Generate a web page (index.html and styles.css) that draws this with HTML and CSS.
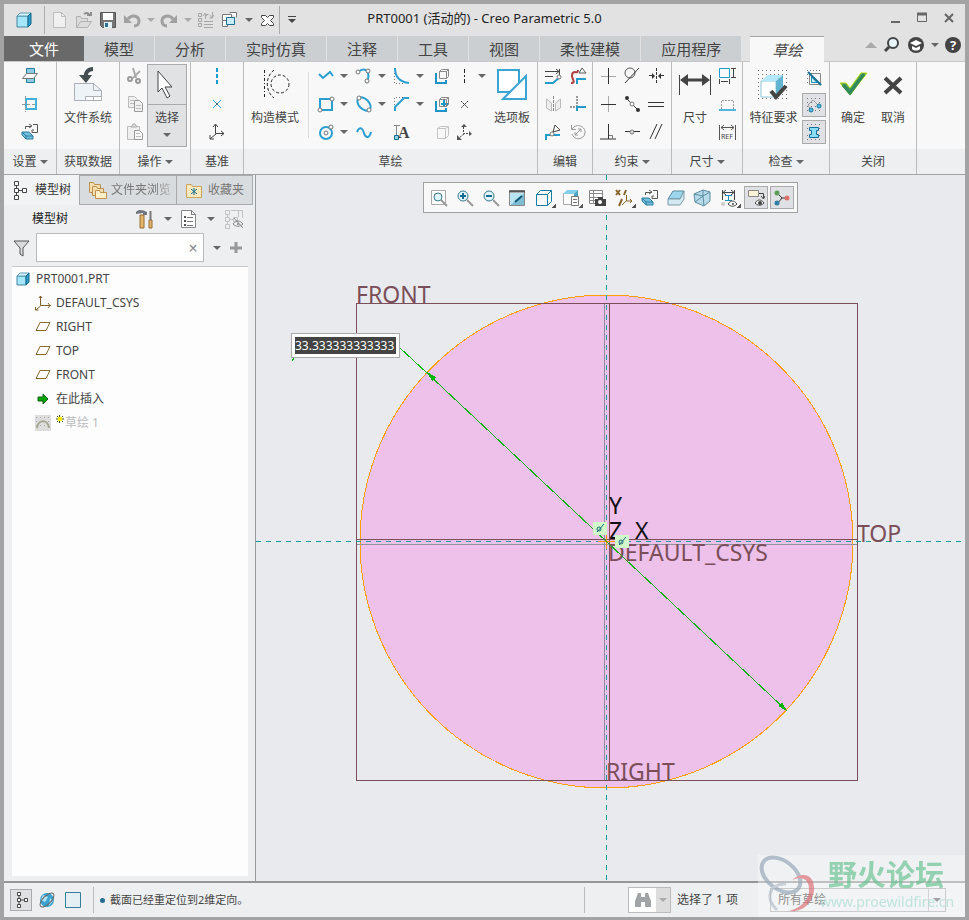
FILE: index.html
```html
<!doctype html>
<html lang="zh-CN">
  <head>
    <meta charset="UTF-8" />
    <meta name="viewport" content="width=device-width, initial-scale=1.0" />
    <title>PRT0001 (活动的) - Creo Parametric 5.0</title>
    <link rel="stylesheet" href="styles.css">
  </head>
  <body>
    <div class="window">
      <header class="titlebar">
        <div class="quick-access">
          <span class="app-icon"><svg class="icon" width="18" height="18"><path d="M2 5h11v11H2z" fill="#a5e6fb" stroke="#45859f"/><path d="M2 5l3-3h11l-3 3z" fill="#d8f5ff" stroke="#5b9ab4"/><path d="M13 5l3-3v11l-3 3z" fill="#2d9bc8" stroke="#10688f"/></svg></span>
          <button class="qa sep" aria-label="新建"><svg class="icon" width="18" height="18"><path d="M3.500 1.500h8l4 4v11h-12z" fill="#f0f0f0" stroke="#bbb"/><path d="M11.500 1.500v4h4" stroke="#bbb"/></svg></button>
          <button class="qa" aria-label="打开"><svg class="icon" width="18" height="18"><path d="M1.500 16.500v-11h4l1 2h6v3M1.500 16.500l4-6h11l-4 6z" fill="#dcdcdc" stroke="#b2b2b2"/><path d="M9 3c3-2 5-1 6 2M12 4h4V1" stroke="#8f8f8f" stroke-width="2"/></svg></button>
          <button class="qa" aria-label="保存"><svg class="icon" width="18" height="18"><path d="M1.500 1.500h15v15h-13l-2-2z" fill="#777" stroke="#555"/><path d="M4 2h10v7H4z" fill="#fff"/><path d="M5 11h8v6H5z" fill="#e4f2f7"/><path d="M6 12h3v4H6z" fill="#277596"/></svg></button>
          <button class="qa" aria-label="撤销"><svg class="icon" width="18" height="18"><path d="M5 8c4-5 11-3 11 2 0 3-2 5-5 5" stroke="#a0a0a0" stroke-width="3"/><path d="M1 4v8h8z" fill="#a0a0a0"/></svg></button>
          <button class="drop" aria-label="撤销列表"><i class="caret pale"></i></button>
          <button class="qa" aria-label="重做"><svg class="icon" width="18" height="18"><path d="M13 8C9 3 2 5 2 10c0 3 2 5 5 5" stroke="#a0a0a0" stroke-width="3"/><path d="M17 4v8H9z" fill="#a0a0a0"/></svg></button>
          <button class="drop" aria-label="重做列表"><i class="caret pale"></i></button>
          <button class="qa" aria-label="重新生成"><svg class="icon" width="18" height="18"><path d="M1.500 2.500h3v3h-3zM1.500 7.500h3v3h-3zM1.500 12.500h3v3h-3zM7 10.500h9M7 13.500h9M7 16.500h9M8.500 8V3.500h3M15.500 1v6h-3M6 5l2-3 2 3M13 4l2 3 2-3" stroke="#a5a5a5"/></svg></button>
          <button class="qa" aria-label="窗口"><svg class="icon" width="18" height="18"><path d="M1.500 3.500h9v6h-9zM8.500 1.500h7v5M1.500 9.500h5v6h-5z" fill="#fff" stroke="#777"/><path d="M5.500 6.500h8v7h-8z" fill="#c8ecf8" stroke="#1f6f90"/></svg></button>
          <button class="drop" aria-label="窗口列表"><i class="caret"></i></button>
          <button class="qa" aria-label="关闭窗口"><svg class="icon" width="18" height="18"><path d="M3.500 4.500h4l2 2 2-2h4v2l-3 3 3 3v2h-4l-2-2-2 2h-4v-2l3-3-3-3z" fill="#fff" stroke="#444"/></svg></button>
          <button class="drop sep" aria-label="自定义快速访问工具栏"><svg class="icon" width="10" height="10"><path d="M1 1.500h8" stroke="#444"/><path d="M1 4h8L5 8z" fill="#444"/></svg></button>
        </div>
        <h1>PRT0001 (活动的) - Creo Parametric 5.0</h1>
        <div class="window-controls">
          <button aria-label="最小化"><svg class="icon" width="12" height="12"><path d="M2 10h9" stroke="#666" stroke-width="2"/></svg></button>
          <button aria-label="最大化"><svg class="icon" width="12" height="12"><path d="M1.500 1.500h9v8h-9z" stroke="#666"/><path d="M1 2h10" stroke="#666" stroke-width="3"/></svg></button>
          <button aria-label="关闭"><svg class="icon" width="12" height="12"><path d="M2 2l8 8M10 2l-8 8" stroke="#666" stroke-width="2"/></svg></button>
        </div>
      </header>

      <nav class="tabs">
        <button class="tab file">文件</button>
        <button class="tab">模型</button>
        <button class="tab">分析</button>
        <button class="tab">实时仿真</button>
        <button class="tab">注释</button>
        <button class="tab">工具</button>
        <button class="tab">视图</button>
        <button class="tab">柔性建模</button>
        <button class="tab">应用程序</button>
        <button class="tab active">草绘</button>
        <div class="tab-tools">
          <button aria-label="折叠功能区"><i class="caret up"></i></button>
          <button aria-label="搜索"><svg class="icon" width="18" height="18"><circle cx="10" cy="7" r="5" fill="#e8f5fa" stroke="#444" stroke-width="2"/><path d="M6 11l-4 4" stroke="#444" stroke-width="3"/></svg></button>
          <button aria-label="学习"><svg class="icon" width="18" height="18"><circle cx="9" cy="9" r="8" fill="#444"/><path d="M3 7l6-3 6 3-6 3zM5 10l4 2 4-2v3c-2 2-6 2-8 0z" fill="#fff"/></svg></button>
          <button aria-label="学习列表"><i class="caret"></i></button>
          <button class="help" aria-label="帮助">?</button>
        </div>
      </nav>

      <div class="ribbon">
        <section class="group g-setup">
          <div class="tools">
            <div class="col">
              <button aria-label="草绘设置"><svg class="icon" width="18" height="18"><path d="M5.500 1.500h8v14h-8z" fill="#8ccbe3" stroke="#267c9f"/><path d="M1.500 11.500l4-5h11l-4 5z" fill="#fff" stroke="#777"/></svg></button>
              <button aria-label="参考"><svg class="icon" width="18" height="18"><path d="M5 4h10v10H5z" stroke="#42aeda" stroke-width="2"/><path d="M1 9.500h15M4.500 1v16" stroke="#999" stroke-dasharray="3 2"/></svg></button>
              <button aria-label="草绘视图"><svg class="icon" width="18" height="18"><path d="M4.500 6V3.500H10M8 1l3 2-3 2M12 1.500h4.500v8H11V7h2" stroke="#555"/><path d="M1 9h7l4 4v3H5l-4-4z" fill="#76bfdc" stroke="#267c9f"/><path d="M1 9l4 4h7M5 13v3" stroke="#267c9f"/></svg></button>
            </div>
          </div>
          <h2><button>设置<i class="caret"></i></button></h2>
        </section>

        <section class="group g-data">
          <div class="tools">
            <button class="big">
              <svg class="icon" width="34" height="36"><path d="M3.500 17.500h19l8 7v10h-27z" fill="#eef3f7" stroke="#aab0b5"/><path d="M22.500 17v7.500H30" stroke="#aab0b5"/><path d="M14.500 30.500h16v4h-16zM22.500 30v4" fill="#fff" stroke="#aab0b5"/><path d="M22 3c-5 0-8 4-7 8" stroke="#444d50" stroke-width="4"/><path d="M8 9h13l-6 8z" fill="#444d50"/></svg>
              <span>文件系统</span>
            </button>
          </div>
          <h2><button>获取数据</button></h2>
        </section>

        <section class="group g-ops">
          <div class="tools">
            <div class="col">
              <button aria-label="剪切"><svg class="icon" width="18" height="18"><path d="M7 1l3 10M14 4L7 11" stroke="#aaa" stroke-width="2"/><circle cx="4" cy="12" r="2" stroke="#999" stroke-width="2"/><circle cx="12" cy="14" r="2" stroke="#999" stroke-width="2"/></svg></button>
              <button aria-label="复制"><svg class="icon" width="18" height="18"><path d="M2.500 1.500h6l3 3v8h-9z" fill="#f0f0f0" stroke="#bbb"/><path d="M8.500 5.500h5l3 3v8h-8z" fill="#f0f0f0" stroke="#999"/><path d="M4 5.500h4M4 8.500h4M10 10.500h5M10 13.500h5" stroke="#bbb"/></svg></button>
              <button aria-label="粘贴"><svg class="icon" width="18" height="18"><path d="M1.500 3.500h12v13h-12z" fill="#eee" stroke="#bbb"/><path d="M5 4l2-3h2l2 3z" fill="#ddd" stroke="#aaa"/><path d="M8.500 7.500h5l3 3v6h-8z" fill="#f8f8f8" stroke="#999"/><path d="M10 10.500h4M10 13.500h5" stroke="#bbb"/></svg></button>
            </div>
            <button class="select-button">
              <span class="select-face"><svg class="icon" width="20" height="30"><path d="M1 1v21l4-4 5 10 3-2-5-9h7z" fill="#fff" stroke="#444"/></svg></span>
              <span class="select-text">选择<i class="caret"></i></span>
            </button>
          </div>
          <h2><button>操作<i class="caret"></i></button></h2>
        </section>

        <section class="group g-datum">
          <div class="tools">
            <div class="col">
              <button aria-label="中心线"><svg class="icon" width="18" height="18"><path d="M9 1v16" stroke="#1b9ad2" stroke-width="2" stroke-dasharray="4 2"/></svg></button>
              <button aria-label="点"><svg class="icon" width="18" height="18"><path d="M5 5l8 8M13 5l-8 8" stroke="#25a2d5"/><path d="M8 8h2v2H8z" fill="#666"/></svg></button>
              <button aria-label="坐标系"><svg class="icon" width="18" height="18"><path d="M7.500 2v8.500H16M8 11l-6 5M5 4l2.500-3L10 4M13 8l3 2.500-3 2.500M2 12v4h4" stroke="#444"/></svg></button>
            </div>
          </div>
          <h2><button>基准</button></h2>
        </section>

        <section class="group g-sketch">
          <div class="tools">
            <button class="big construct">
              <svg class="icon" width="34" height="36"><path d="M6.500 4v29" stroke="#222" stroke-dasharray="3 2 1 2"/><path d="M16 4c-9 7-9 21 0 28" stroke="#222" stroke-dasharray="3 2"/><circle cx="22" cy="18" r="9" stroke="#222" stroke-dasharray="3 2"/></svg>
              <span>构造模式</span>
            </button>
            <div class="sketch-grid">
              <button aria-label="线链"><svg class="icon" width="18" height="18"><path d="M2 7l4 4 7-6 3 4" stroke="#2c9fd1" stroke-width="2"/></svg></button><button class="drop" aria-label="线链列表"><i class="caret"></i></button>
              <button aria-label="弧"><svg class="icon" width="18" height="18"><path d="M3 5c6-5 12-2 10 7l-2 4" stroke="#2c9fd1" stroke-width="2"/><g fill="#fff" stroke="#777"><circle cx="3" cy="5" r="2"/><circle cx="13" cy="4" r="2"/><circle cx="12" cy="14" r="2"/></g></svg></button><button class="drop" aria-label="弧列表"><i class="caret"></i></button>
              <button aria-label="圆角"><svg class="icon" width="18" height="18"><path d="M2 1c0 9 5 14 14 15" stroke="#2c9fd1" stroke-width="2"/><path d="M1.500 6v10.500H10" stroke="#777" stroke-dasharray="1 2"/></svg></button><button class="drop" aria-label="圆角列表"><i class="caret"></i></button>
              <button aria-label="偏移"><svg class="icon" width="18" height="18"><path d="M3 6v10h10v-3" stroke="#1e94c6" stroke-width="2"/><path d="M6.500 4.500h7v7h-7zM6.500 4.500l2-2h7v7l-2 2M13.500 4.500l2-2" stroke="#888"/></svg></button>
              <button aria-label="中心线"><svg class="icon" width="18" height="18"><path d="M9.500 2v15" stroke="#222" stroke-dasharray="4 2 2 2"/></svg></button><button class="drop" aria-label="中心线列表"><i class="caret"></i></button>

              <button aria-label="矩形"><svg class="icon" width="18" height="18"><path d="M3 4h12v11H3z" stroke="#2c9fd1" stroke-width="2"/><g fill="#fff" stroke="#777"><circle cx="15" cy="4" r="2"/><circle cx="3" cy="15" r="2"/></g></svg></button><button class="drop" aria-label="矩形列表"><i class="caret"></i></button>
              <button aria-label="椭圆"><svg class="icon" width="18" height="18"><ellipse cx="9" cy="9" rx="8" ry="5" transform="rotate(45 9 9)" stroke="#2c9fd1" stroke-width="2"/><g fill="#fff" stroke="#777"><circle cx="4" cy="3" r="2"/><circle cx="14" cy="15" r="2"/></g></svg></button><button class="drop" aria-label="椭圆列表"><i class="caret"></i></button>
              <button aria-label="倒角"><svg class="icon" width="18" height="18"><path d="M2 16v-4L11 3h5" stroke="#2c9fd1" stroke-width="2"/><path d="M1.500 10V2.500H10" stroke="#777" stroke-dasharray="1 2"/></svg></button><button class="drop" aria-label="倒角列表"><i class="caret"></i></button>
              <button aria-label="加厚"><svg class="icon" width="18" height="18"><path d="M3 6v10h10v-3M8 9h7M11 4v7" stroke="#1e94c6" stroke-width="2"/><path d="M6.500 4.500h7v7h-7zM6.500 4.500l2-2h7v7l-2 2M13.500 4.500l2-2" stroke="#888"/></svg></button>
              <button aria-label="点"><svg class="icon" width="18" height="18"><path d="M6 6l7 7M13 6l-7 7" stroke="#222" stroke-dasharray="2 1"/></svg></button><span></span>

              <button aria-label="圆"><svg class="icon" width="18" height="18"><circle cx="9" cy="10" r="6" stroke="#2c9fd1" stroke-width="2"/><g fill="#fff" stroke="#777"><circle cx="9" cy="10" r="2"/><circle cx="14" cy="4" r="2"/></g></svg></button><button class="drop" aria-label="圆列表"><i class="caret"></i></button>
              <button aria-label="样条"><svg class="icon" width="18" height="18"><path d="M2 9c3-7 6-3 7 1s5 7 7-1" stroke="#2c9fd1" stroke-width="2"/></svg></button><span></span>
              <button aria-label="文本"><svg class="icon" width="18" height="18"><path d="M1 2.500h6M3.500 3v10" stroke="#888"/><path d="M1.500 12.500h4v4h-4z" fill="#8dd4ef" stroke="#176c93"/><text class="letter" x="5" y="15">A</text></svg></button><span></span>
              <button aria-label="投影"><svg class="icon" width="18" height="18"><path d="M4.500 5.500h8v10h-8zM4.500 5.500l3-2h8v9l-3 3M12.500 5.500l3-2" stroke="#c5c5c5"/></svg></button>
              <button aria-label="坐标系"><svg class="icon" width="18" height="18"><path d="M8.500 4v6.500H14M9 11l-5 4" stroke="#444" stroke-dasharray="2 1"/><path d="M6 4l3-3 3 3zM14 8l3 3-3 2zM2 12v5h5z" fill="#555"/></svg></button><span></span>
            </div>
            <button class="big palette">
              <svg class="icon" width="34" height="36"><path d="M3 4h21v22H3z" fill="#fff" stroke="#3aa5d5" stroke-width="2"/><path d="M31 10v23H8z" fill="#fff" stroke="#3aa5d5" stroke-width="2"/></svg>
              <span>选项板</span>
            </button>
          </div>
          <h2><button>草绘</button></h2>
        </section>

        <section class="group g-edit">
          <div class="tools">
            <div class="col two">
              <button aria-label="修改"><svg class="icon" width="18" height="18"><path d="M1 4.500h15M15.500 2v6M12 2l3 2.500L12 7M1 9.500h8" stroke="#444"/><path d="M1 16h8l7-6" stroke="#239bcb" stroke-width="2"/><circle cx="15" cy="10" r="2" fill="#fff" stroke="#777"/></svg></button>
              <button aria-label="删除段"><svg class="icon" width="18" height="18"><path d="M2 16c6 0 0-5 1-8 1-6 6 0 6-5" stroke="#b04040" stroke-width="2"/><path d="M8 17V12h9" stroke="#239bcb" stroke-width="2"/><path d="M10 6l3-5 4 5z" fill="#fff" stroke="#555"/></svg></button>
              <button aria-label="镜像"><svg class="icon" width="18" height="18"><path d="M2.500 4l5 4v8l-5-3zM16.500 4l-5 4v8l5-3z" fill="#eee" stroke="#bbb"/><path d="M9.500 1v16" stroke="#888" stroke-dasharray="3 1"/></svg></button>
              <button aria-label="拐角"><svg class="icon" width="18" height="18"><path d="M8 16v-4h9" stroke="#239bcb" stroke-width="2"/><path d="M8 1v10M1 12h6" stroke="#999" stroke-width="2" stroke-dasharray="2 1"/></svg></button>
              <button aria-label="分割"><svg class="icon" width="18" height="18"><path d="M2 17v-5h14" stroke="#239bcb" stroke-width="2"/><circle cx="8" cy="11" r="2" fill="#fff" stroke="#777"/><path d="M9 9l2-7 5 5z" fill="#fff" stroke="#444"/></svg></button>
              <button aria-label="旋转调整大小"><svg class="icon" width="18" height="18"><path d="M3 6c5-7 14-2 13 4-1 7-11 8-13 1M2.500 2v4.500H7M6 12l6-6M9 6h3v3M6 9v3h3" stroke="#999"/></svg></button>
            </div>
          </div>
          <h2><button>编辑</button></h2>
        </section>

        <section class="group g-constrain">
          <div class="tools">
            <div class="col three">
              <button aria-label="竖直"><svg class="icon" width="18" height="18"><path d="M2 9.500h15" stroke="#aaa"/><path d="M9.500 1v16" stroke="#333"/></svg></button>
              <button aria-label="相切"><svg class="icon" width="18" height="18"><circle cx="7" cy="6" r="5" stroke="#555"/><path d="M2 16L16 1" stroke="#333"/></svg></button>
              <button aria-label="对称"><svg class="icon" width="18" height="18"><path d="M9.500 1v16" stroke="#333" stroke-dasharray="3 1"/><path d="M2 8.500h5M17 8.500h-5" stroke="#333"/><path d="M5 6l3 3-3 3zM14 6l-3 3 3 3z" fill="#333"/></svg></button>
              <button aria-label="水平"><svg class="icon" width="18" height="18"><path d="M9.500 1v16" stroke="#aaa"/><path d="M2 9.500h15" stroke="#333"/></svg></button>
              <button aria-label="中点"><svg class="icon" width="18" height="18"><path d="M4 4l11 11" stroke="#333"/><circle cx="4" cy="3" r="2" fill="#333"/><circle cx="15" cy="15" r="2" fill="#333"/><circle cx="9" cy="9" r="2" fill="#fff" stroke="#777"/></svg></button>
              <button aria-label="相等"><svg class="icon" width="18" height="18"><path d="M1 7.500h16M1 11.500h16" stroke="#333"/></svg></button>
              <button aria-label="垂直"><svg class="icon" width="18" height="18"><path d="M9.500 1v15M1 16h16" stroke="#333"/><path d="M10 12.500h3.500V16" stroke="#777"/></svg></button>
              <button aria-label="重合"><svg class="icon" width="18" height="18"><path d="M2 8.500h15" stroke="#333"/><circle cx="9" cy="9" r="2" fill="#ddd" stroke="#777"/></svg></button>
              <button aria-label="平行"><svg class="icon" width="18" height="18"><path d="M3 16L10 1M8 16L15 1" stroke="#333"/></svg></button>
            </div>
          </div>
          <h2><button>约束<i class="caret"></i></button></h2>
        </section>

        <section class="group g-dim">
          <div class="tools">
            <button class="big">
              <svg class="icon" width="34" height="36"><path d="M1.500 9v20M32.500 9v20" stroke="#444"/><path d="M6 14h22" stroke="#444" stroke-width="3"/><path d="M2 14l8-6v12zM32 14l-8-6v12z" fill="#444"/></svg>
              <span>尺寸</span>
            </button>
            <div class="col">
              <button aria-label="周长"><svg class="icon" width="18" height="18"><path d="M1.500 1.500h10v9h-10z" stroke="#239bcb"/><path d="M15.500 2v8M13 1.500h5M13 10.500h5M1.500 12v5M11.500 12v5M3 14.500h7" stroke="#444"/></svg></button>
              <button aria-label="基线"><svg class="icon" width="18" height="18"><path d="M3.500 14V5.500h12V14" stroke="#999" stroke-dasharray="2 1"/><path d="M1 15h17" stroke="#52b6de" stroke-width="2"/></svg></button>
              <button aria-label="参考"><svg class="icon" width="18" height="18"><path d="M1.500 2v15M17.500 2v15M3 4.500h13M6 2L3 4.500 6 7M13 2l3 2.500L13 7" stroke="#555"/><text class="ref" x="3" y="16">REF</text></svg></button>
            </div>
          </div>
          <h2><button>尺寸<i class="caret"></i></button></h2>
        </section>

        <section class="group g-check">
          <div class="tools">
            <button class="big">
              <svg class="icon" width="34" height="36"><g stroke="#777" stroke-dasharray="1 3"><path d="M2 4.500h30M2 8.500h30M2 12.500h30M2 16.500h30M2 20.500h30M2 24.500h30M2 28.500h30M2 32.500h30"/></g><path d="M5 15h15v16H5z" fill="#fff" stroke="#8ec6dc"/><path d="M5 15l7-6h15l-7 6z" fill="#b2e8fa"/><path d="M20 15l7-6v16l-7 6z" fill="#63b4d1"/><path d="M15 25l5 6 10-11" stroke="#444" stroke-width="4"/></svg>
              <span>特征要求</span>
            </button>
            <div class="col check-col">
              <button aria-label="重叠几何"><svg class="icon" width="18" height="18"><path d="M2 1.500h14M2 5.500h3M2 9.500h3M2 13.500h3" stroke="#777" stroke-dasharray="1 2"/><path d="M4.500 4.500h11v11h-11z" stroke="#888"/><path d="M6.500 8v5.500H12z" fill="#c9eefa" stroke="#2791bd"/><path d="M3 3l13 13" stroke="#126f97" stroke-width="2"/></svg></button>
              <button class="on" aria-label="突出显示开放端"><svg class="icon" width="18" height="18"><path d="M2 2.500h14M2 6.500h14M2 10.500h14M2 14.500h14" stroke="#777" stroke-dasharray="1 3"/><path d="M6 14L3 9l5-5 6 6" stroke="#999"/><circle cx="6" cy="14" r="2" fill="#55bde8" stroke="#16739b"/><circle cx="14" cy="10" r="2" fill="#55bde8" stroke="#16739b"/></svg></button>
              <button class="on" aria-label="着色封闭环"><svg class="icon" width="18" height="18"><path d="M2 1.500h14M2 5.500h14M2 12.500h14M2 16.500h14" stroke="#777" stroke-dasharray="1 3"/><path d="M4.500 4.500h9v3h-2v4h2v3h-9v-3h2v-4h-2z" fill="#8ddcf5" stroke="#126f97"/></svg></button>
            </div>
          </div>
          <h2><button>检查<i class="caret"></i></button></h2>
        </section>

        <section class="group g-close">
          <div class="tools">
            <button class="big">
              <svg class="icon" width="34" height="36"><path d="M4 17h6l4 5L25 7h6L14 29z" fill="#4c9d5a" stroke="#b7e000"/><path d="M7 19l7 8L28 8" stroke="#32885d" stroke-width="3"/></svg>
              <span>确定</span>
            </button>
            <button class="big">
              <svg class="icon" width="34" height="36"><path d="M9 12l16 15M25 12L9 27" stroke="#444" stroke-width="4"/></svg>
              <span>取消</span>
            </button>
          </div>
          <h2><button>关闭</button></h2>
        </section>
        <div class="group rest"><div class="tools"></div><h2></h2></div>
      </div>

      <main class="workspace">
        <aside class="sidebar">
          <div class="side-tabs">
            <button class="side-tab current"><svg class="icon" width="18" height="20"><path d="M4.500 6v9M6 10.500h5" stroke="#444"/><path d="M2.500 1.500h4v4h-4zM2.500 8.500h4v4h-4zM2.500 15.500h4v4h-4zM10.500 8.500h4v4h-4z" fill="#fff" stroke="#444"/></svg>模型树</button>
            <button class="side-tab browser"><svg class="icon" width="20" height="20"><g fill="#f6dfae" stroke="#bd914d"><path d="M1.500 2.500h4l1 2h6v8h-11z"/><path d="M4.500 6.500h4l1 2h6v7h-11z"/><path d="M7.500 10.500h4l1 2h6v6h-11z" fill="#fff0ca"/></g></svg><span>文件夹浏览</span></button>
            <button class="side-tab"><svg class="icon" width="18" height="20"><path d="M1.500 4.500h5l1 2h9v11h-15z" fill="#fbe8bd" stroke="#caa35f"/><path d="M9 8v7M6 9l6 5M12 9l-6 5" stroke="#176b91"/></svg>收藏夹</button>
          </div>
          <div class="side-head">
            <h2>模型树</h2>
            <button aria-label="设置"><svg class="icon" width="20" height="22"><path d="M1 4c3-3 7-2 11 0v3H8V5L1 6z" fill="#707780"/><path d="M5 7h4v13H5zM14 12h3v8h-3z" fill="#e4b66a" stroke="#936f33"/><path d="M15.500 3v9" stroke="#777" stroke-width="2"/></svg></button>
            <button class="drop" aria-label="设置列表"><i class="caret"></i></button>
            <button aria-label="显示"><svg class="icon" width="18" height="20"><path d="M1.500 1.500h10l4 4v13h-14z" fill="#fff" stroke="#888"/><path d="M11.500 1.500v4h4M7 8.500h6M7 12.500h6M7 16.500h6" stroke="#777"/><path d="M4 8h2M4 12h2M4 16h2" stroke="#555" stroke-width="2"/></svg></button>
            <button class="drop" aria-label="显示列表"><i class="caret"></i></button>
            <button aria-label="隐藏项"><svg class="icon" width="22" height="22"><path d="M2.500 2.500h4v4h-4zM2.500 9.500h4v4h-4zM2.500 16.500h4v4h-4zM10.500 9.500h4v4h-4zM4.500 6v3M4.500 13v3M6 11.500h4M8 2.500h11.500V10M15.500 2v7" stroke="#c2c2c2"/><path d="M10 16c3-4 7-4 10 0-3 3-7 3-10 0M11 10l9 10" stroke="#888"/><circle cx="15" cy="16" r="1" fill="#888"/></svg></button>
          </div>
          <div class="filter">
            <svg class="icon" width="18" height="18"><path d="M2 2h15l-6 7v8l-3-2V9z" fill="#d8dadb" stroke="#555"/></svg>
            <label class="filter-box"><input type="text" aria-label="过滤模型树"><button aria-label="清除">×</button></label>
            <button class="drop" aria-label="过滤选项"><i class="caret"></i></button>
            <button aria-label="添加"><svg class="icon" width="14" height="14"><path d="M7 1v11M1 7h12" stroke="#999" stroke-width="3"/></svg></button>
          </div>
          <ul class="tree">
            <li class="root"><svg class="icon" width="16" height="16"><path d="M2 5h9v9H2z" fill="#a5e6fb" stroke="#45859f"/><path d="M2 5l3-3h9l-3 3z" fill="#d8f5ff" stroke="#5b9ab4"/><path d="M11 5l3-3v9l-3 3z" fill="#2d9bc8" stroke="#10688f"/></svg>PRT0001.PRT</li>
            <li><svg class="icon" width="16" height="16"><path d="M5.500 1v9.500H16M5.500 11L1 15M4 3l1.500-2L7 3M13 8l2 2.500-2 2.500M.5 12v3h3" stroke="#7d6028"/></svg>DEFAULT_CSYS</li>
            <li><svg class="icon" width="16" height="16"><path d="M5 3.500h10l-4 8H1z" stroke="#8a692a"/></svg>RIGHT</li>
            <li><svg class="icon" width="16" height="16"><path d="M5 3.500h10l-4 8H1z" stroke="#8a692a"/></svg>TOP</li>
            <li><svg class="icon" width="16" height="16"><path d="M5 3.500h10l-4 8H1z" stroke="#8a692a"/></svg>FRONT</li>
            <li><svg class="icon" width="16" height="16"><path d="M3 6h5V3l5 5-5 5v-3H3z" fill="#00a500" stroke="#176117"/></svg>在此插入</li>
            <li class="dim"><svg class="icon" width="16" height="16"><path d="M0 0h16v16H0z" fill="#ddd"/><path d="M2 13c1-9 11-9 12 0" stroke="#aaa795" stroke-width="2"/><path d="M1 2.500h14M1 6.500h14M1 10.500h14" stroke="#aaa" stroke-dasharray="1 3"/></svg><svg class="icon star" width="9" height="12"><path d="M4.500 4v8M1 8h8M2 5l6 6M8 5l-6 6" stroke="#4b4b00"/><path d="M3 6h4v4H3z" fill="#ffed00"/></svg>草绘 1</li>
          </ul>
        </aside>

        <div class="viewport">
          <svg class="drawing" viewBox="256 175 709 706" preserveAspectRatio="xMinYMin meet">
            <circle cx="606.5" cy="541.5" r="246.5" fill="#eec1ea" stroke="#ffa000"/>
            <path class="datum" d="M356.500 303.500h501v477h-501zM609.500 303v477M356 539.500h501"/>
            <path d="M604.500 304v476M357 544.500h500" fill="none" stroke="#91919f"/>
            <path d="M606.500 175v706M256 541.500h706" fill="none" stroke="#00a098" stroke-dasharray="5 5"/>
            <text class="plane" x="356" y="303">FRONT</text>
            <text class="plane" x="857" y="542">TOP</text>
            <text class="plane" x="606" y="780">RIGHT</text>
            <text class="plane" x="608" y="561">DEFAULT_CSYS</text>
            <text class="axis" x="609" y="514">Y</text>
            <text class="axis" x="609" y="539">Z</text>
            <text class="axis" x="635" y="539">X</text>
            <path d="M606.500 522v19" stroke="#00d000" fill="none"/>
            <path d="M598 541.500h18M606.500 534v15" stroke="#ff9800" fill="none"/>
            <path d="M292 361l3-4M400 348l27 25 360 338" fill="none" stroke="#00b400"/>
            <path d="M427 372l9 5-4 4zM787 711l-9-5 4-4z" fill="#00b400"/>
            <g class="constraint"><path d="M593 522h14v13h-14zM615 535h14v13h-14z"/><circle cx="599" cy="529" r="2"/><circle cx="621" cy="542" r="2"/><path d="M597 532l7-8M619 545l7-8"/></g>
          </svg>
          <label class="dim-edit"><input type="text" value="33.333333333333" aria-label="直径"></label>

          <div class="view-tools">
            <button aria-label="重新调整"><svg class="icon" width="18" height="18"><path d="M1.500 1.500h14v14h-14z" fill="#fff" stroke="#aaa"/><circle cx="8" cy="8" r="4" fill="#e1f5fc" stroke="#37788f"/><path d="M11 11l6 6" stroke="#999" stroke-width="2"/></svg></button>
            <button aria-label="放大"><svg class="icon" width="18" height="18"><circle cx="7" cy="7" r="5" fill="#e1f5fc" stroke="#37788f"/><path d="M4 7h6M7 4v6" stroke="#176c93" stroke-width="2"/><path d="M11 11l6 6" stroke="#999" stroke-width="2"/></svg></button>
            <button aria-label="缩小"><svg class="icon" width="18" height="18"><circle cx="7" cy="7" r="5" fill="#e1f5fc" stroke="#37788f"/><path d="M4 7h6" stroke="#176c93" stroke-width="2"/><path d="M11 11l6 6" stroke="#999" stroke-width="2"/></svg></button>
            <button aria-label="重画"><svg class="icon" width="18" height="18"><path d="M1.500 1.500h15v15h-15z" fill="#fff" stroke="#888"/><path d="M3 15L16 4v12H3z" fill="#7fbdd5"/><path d="M2 4h14L4 15H2z" fill="#b9e3f1"/><path d="M1 2.500h16" stroke="#555" stroke-width="2"/><path d="M7 13l7-6" stroke="#0f5575" stroke-width="2"/></svg></button>
            <button class="more" aria-label="显示样式"><svg class="icon" width="18" height="18"><path d="M1.500 5.500l4-4h11v11l-4 4h-11z" fill="#fff" stroke="#187ca4"/><path d="M1.500 5.500h11v11M12.500 5.500l4-4" stroke="#187ca4"/></svg></button>
            <button class="more" aria-label="已保存方向"><svg class="icon" width="18" height="18"><path d="M1.500 4.500h11v11h-11z" fill="#fff" stroke="#aaa"/><path d="M1 5l4-4h11l-4 4z" fill="#83cfe9"/><path d="M12 5l4-4v9h-4z" fill="#4ba3c4"/><path d="M9.500 7.500h7v9h-7z" fill="#fff" stroke="#777"/><path d="M11 10.500h4M11 13.500h4" stroke="#777"/></svg></button>
            <button aria-label="视图管理器"><svg class="icon" width="18" height="18"><path d="M1.500 1.500h13v13h-13zM1 4.500h14M1 8.500h14M1 11.500h14M5.500 1v14" fill="#fff" stroke="#888"/><path d="M7 10h11v7H7zM10 8h5v2h-5z" fill="#444"/><circle cx="12" cy="13" r="2" fill="#fff"/></svg></button>
            <button class="more" aria-label="基准显示"><svg class="icon" width="18" height="18"><path d="M1 1l4 5M5 1L1 6M11 1L9 6M7 10l-3 7" stroke="#87652a" stroke-width="2"/><path d="M11.500 6v6H17M11 12l-4 4M15 10l2 2-2 2" stroke="#87652a"/></svg></button>
            <button aria-label="草绘视图"><svg class="icon" width="18" height="18"><path d="M4.500 6V3.500H10M8 1l3 2-3 2M12 1.500h4.500v8H11V7h2" stroke="#555"/><path d="M1 9h7l4 4v3H5l-4-4z" fill="#76bfdc" stroke="#267c9f"/><path d="M1 9l4 4h7M5 13v3" stroke="#267c9f"/></svg></button>
            <button aria-label="修剪模型"><svg class="icon" width="18" height="18"><path d="M1 10l5-8h11l-4 8z" fill="#9bd6ea" stroke="#57889c"/><path d="M1 10h12l4-8v8l-4 6H1z" fill="#d3e9f1" stroke="#7c9caa"/></svg></button>
            <button aria-label="透视图"><svg class="icon" width="18" height="18"><path d="M1 5l9-4 7 2v9l-6 5-9-4z" fill="#b7dce9" stroke="#5a8ca1"/><path d="M1 5l9 2 7-4M10 7l1 10M10 1v6M2 13l8-6" stroke="#5a8ca1"/></svg></button>
            <button class="more" aria-label="草绘器显示"><svg class="icon" width="18" height="18"><path d="M2.500 1v10M14.500 1v10M3 3.500h11M6 1L3 3.500 6 6M11 1l3 2.500L11 6" stroke="#444"/><path d="M5 6.500h7M8.500 7v4M5 11.500h7" stroke="#258eb8"/><circle cx="3" cy="15" r="2" fill="#ccc"/><path d="M8 15c3-4 6-4 9 0-3 3-6 3-9 0" fill="#fff" stroke="#444"/><circle cx="13" cy="15" r="1" fill="#444"/></svg></button>
            <button class="on" aria-label="注释显示"><svg class="icon" width="18" height="18"><path d="M1.500 1.500h10v6h-10z" fill="#fff4d8" stroke="#888"/><path d="M12 4.500h4.500V9M14 7l2.500 3L18 7" stroke="#444"/><path d="M8 14c3-4 6-4 9 0-3 3-6 3-9 0" fill="#fff" stroke="#444"/><circle cx="13" cy="14" r="2" fill="#444"/></svg></button>
            <button class="on" aria-label="旋转中心"><svg class="icon" width="18" height="18"><path d="M4 4l5 5-5 6M9 9h5" stroke="#333"/><circle cx="4" cy="4" r="2.500" fill="#5a9c54"/><circle cx="4" cy="14" r="2.500" fill="#327fa5"/><circle cx="14" cy="9" r="2.500" fill="#df716a"/></svg></button>
          </div>
        </div>
      </main>

      <footer class="statusbar">
        <button class="on" aria-label="导航区"><svg class="icon" width="18" height="18"><path d="M7 4v10M7 9h6" stroke="#444"/><path d="M5.500 1.500h3v3h-3zM5.500 7.500h3v3h-3zM5.500 13.500h3v3h-3zM12.500 7.500h3v3h-3z" fill="#fff" stroke="#444"/></svg></button>
        <button aria-label="浏览器"><svg class="icon" width="18" height="18"><circle cx="9" cy="9" r="7" fill="#3ba3d0"/><path d="M5 4l5 2-3 5-4-2zM12 7l3 3-4 5z" fill="#b8e5f3"/><ellipse cx="9" cy="9" rx="9" ry="4" transform="rotate(-45 9 9)" stroke="#666"/></svg></button>
        <button aria-label="全屏"><svg class="icon" width="18" height="18"><path d="M1.500 1.500h15v15h-15z" fill="#e4eff4" stroke="#337e9a"/></svg></button>
        <p class="message"><i class="bullet"></i>截面已经重定位到2维定向。</p>
        <div class="finder"><button aria-label="查找"><svg class="icon" width="20" height="18"><path d="M5 2h3v4h4V2h3l3 8v6h-6v-5H8v5H2v-6z" fill="#a0a4a6"/></svg></button><button class="finder-drop" aria-label="查找列表"><i class="caret pale"></i></button></div>
        <p class="count">选择了 1 项</p>
        <div class="filter-select"><select aria-label="选择过滤器"><option>所有草绘</option></select><i class="caret"></i></div>
      </footer>

      <div class="watermark">
        <svg class="icon mark" width="64" height="62"><ellipse cx="23" cy="20" rx="22" ry="14" transform="rotate(38 23 20)" stroke="#a5b4c2" stroke-width="4"/><path d="M28 29c-16-1-22 14-9 26" stroke="#bfc8d0" stroke-width="3"/><path d="M34 25c12-10 23-4 22 10-1 13-12 23-25 21 13-3 21-13 20-22 0-10-7-13-17-9z" fill="#e0868a"/></svg>
        <div class="brand"><strong>野火论坛</strong><span>www.proewildfire.cn</span></div>
      </div>
    </div>
  </body>
</html>
```

FILE: styles.css
```css
* {
  box-sizing: border-box;
}

body {
  margin: 0;
  background: #151a22;
  color: #444;
  font-family: "Noto Sans", "Noto Sans CJK SC", sans-serif;
  font-size: 12px;
  line-height: 16px;
}

button,
input,
select {
  font: inherit;
  color: inherit;
}

button {
  display: flex;
  align-items: center;
  justify-content: center;
  padding: 0;
  border: 0;
  background: none;
}

h1,
h2,
p,
ul {
  margin: 0;
  padding: 0;
  font-size: 12px;
  font-weight: 400;
}

.icon {
  display: block;
  flex: none;
  fill: none;
}

.caret {
  flex: none;
  width: 0;
  height: 0;
  border: 4px solid transparent;
  border-top-color: #666;
  border-bottom: 0;
}

.caret.pale {
  border-top-color: #aaa;
}

.caret.up {
  border-width: 0 6px 6px;
  border-bottom: 6px solid #aaa;
}

.window {
  position: relative;
  display: flex;
  flex-direction: column;
  min-height: calc(100vh - 1px);
  border: 4px solid #a3a3a3;
  border-bottom-width: 3px;
  background: #edeff1;
}

/* title bar */
.titlebar {
  display: grid;
  grid-template-columns: 1fr auto 1fr;
  align-items: center;
  height: 32px;
  background: #e2e2e2;
}

.titlebar h1 {
  padding-bottom: 4px;
  font-size: 13px;
  color: #222;
}

.quick-access {
  display: flex;
  height: 28px;
}

.app-icon {
  display: flex;
  align-items: center;
  justify-content: center;
  width: 40px;
}

.qa {
  width: 24px;
}

.qa.sep {
  width: 28px;
}

.drop {
  width: 13px;
}

.drop.sep {
  width: 24px;
}

.sep {
  border-left: 1px solid #aaa;
}

.window-controls {
  display: flex;
  justify-content: flex-end;
  gap: 15px;
  padding: 0 10px 4px 0;
}

/* tabs */
.tabs {
  display: flex;
  gap: 1px;
  height: 26px;
  border-bottom: 1px solid #c6c8ca;
  background: #e2e2e2;
}

.tab {
  height: 25px;
  padding: 0 20px;
  background: #cbcfd2;
  font-size: 15px;
}

.tab.file {
  margin-right: -1px;
  padding: 0 25px;
  background: #696969;
  color: #fff;
}

.tab.active {
  height: 26px;
  margin-left: 8px;
  padding: 0 22px;
  border-top: 1px solid #a5a5a5;
  background: #f8f8f8;
  font-style: italic;
}

.tab-tools {
  display: flex;
  align-items: center;
  gap: 6px;
  margin-left: auto;
  padding: 0 4px 8px 0;
}

.help {
  width: 16px;
  height: 16px;
  border-radius: 50%;
  background: #444;
  color: #fff;
  font-size: 13px;
  font-weight: 700;
}

/* ribbon */
.ribbon {
  display: flex;
  border-bottom: 1px solid #a5a5a5;
}

.group {
  display: flex;
  flex-direction: column;
  border-right: 1px solid #bbb;
}

.tools {
  display: flex;
  justify-content: center;
  height: 87px;
  background: #f8f8f8;
}

.group h2 {
  display: flex;
  align-items: center;
  justify-content: center;
  height: 25px;
}

.group h2 button {
  gap: 3px;
}

.rest {
  flex: 1;
  border-right: 0;
}

.g-setup,
.g-datum {
  flex: 0 0 53px;
}

.g-data {
  flex: 0 0 63px;
}

.g-ops,
.g-dim {
  flex: 0 0 71px;
}

.g-sketch {
  flex: 0 0 294px;
}

.g-sketch .tools {
  justify-content: flex-start;
}

.g-edit {
  flex: 0 0 55px;
}

.g-constrain {
  flex: 0 0 79px;
}

.g-check,
.g-close {
  flex: 0 0 87px;
}

.col {
  display: grid;
  grid-template-columns: 24px;
  grid-auto-rows: 28px;
}

.col.two {
  grid-template-columns: 25px 25px;
}

.col.three {
  grid-template-columns: 24px 24px 24px;
}

.big {
  flex-direction: column;
  justify-content: flex-start;
  gap: 8px;
  min-width: 40px;
  padding-top: 4px;
  white-space: nowrap;
}

.select-button {
  flex-direction: column;
  width: 40px;
  height: 83px;
  margin-top: 2px;
  border: 1px solid #aaa;
  background: #e0e2e4;
}

.select-face {
  display: grid;
  place-items: center;
  width: 100%;
  height: 40px;
  border-bottom: 1px solid #aaa;
}

.select-text {
  display: flex;
  flex: 1;
  flex-direction: column;
  align-items: center;
  gap: 7px;
  padding-top: 5px;
}

.construct {
  width: 62px;
}

.sketch-grid {
  display: grid;
  grid-template-columns: 20px 18px 20px 18px 20px 18px 24px 20px 16px;
  grid-auto-rows: 28px;
  margin-left: 2px;
  padding-left: 8px;
  background: linear-gradient(#ddd, #ddd) 0 10px / 1px 66px no-repeat;
}

.sketch-grid .drop {
  width: 16px;
}

.palette {
  width: 44px;
}

.letter {
  fill: #444;
  font: 700 16px "Liberation Serif", serif;
}

.ref {
  fill: #444;
  font: 7px "Noto Sans", sans-serif;
}

.g-check .tools {
  gap: 4px;
  padding-left: 3px;
}

.check-col {
  grid-auto-rows: 24px;
  row-gap: 3px;
  padding-top: 4px;
}

.on {
  border: 1px solid #aaa;
  background: #dfe1e4;
}

/* model tree */
.workspace {
  display: flex;
  flex: 1;
}

.sidebar {
  display: flex;
  flex: 0 0 252px;
  flex-direction: column;
  min-width: 0;
  border-right: 1px solid #999;
}

.side-tabs {
  display: flex;
  height: 30px;
  padding-right: 2px;
}

.side-tab {
  flex: none;
  gap: 5px;
  padding: 0 8px;
  border: 1px solid #aaa;
  border-left: 0;
  background: #d9dcde;
  color: #777;
  white-space: nowrap;
}

.side-tab.current {
  border-width: 0 1px 0 0;
  background: #f2f3f5;
  color: #333;
}

.side-tab.browser {
  flex: 1 1 0;
  min-width: 0;
  gap: 3px;
  justify-content: flex-start;
  padding-right: 2px;
}

.side-tab.browser span {
  mask-image: linear-gradient(90deg, #000 75%, rgba(0, 0, 0, 0.3));
}

.side-head {
  display: flex;
  align-items: center;
  gap: 6px;
  height: 28px;
  padding: 0 10px 0 28px;
}

.side-head h2 {
  flex: 1;
  color: #222;
}

.filter {
  display: flex;
  align-items: center;
  gap: 6px;
  padding: 0 12px 0 8px;
}

.filter-box {
  display: flex;
  flex: 1;
  height: 29px;
  border: 1px solid #bbb;
  background: #fff;
}

.filter-box input {
  width: 0;
  flex: 1;
  border: 0;
  background: none;
}

.filter-box button {
  width: 20px;
  color: #888;
  font-size: 16px;
}

.tree {
  flex: 1;
  margin: 4px 7px 5px 8px;
  border-top: 1px solid #c8c8c8;
  background: #fdfdfd;
  list-style: none;
}

.tree li {
  display: flex;
  align-items: center;
  gap: 5px;
  height: 24px;
  padding-left: 23px;
}

.tree .root {
  padding-left: 3px;
}

.tree .dim {
  gap: 1px;
  color: #bbb;
}

.star {
  align-self: flex-start;
  margin-left: 3px;
}

/* graphics area */
.viewport {
  position: relative;
  flex: 1;
  overflow: hidden;
  background: #e8eaee;
}

.drawing {
  display: block;
  width: 100%;
  shape-rendering: crispEdges;
}

.drawing text {
  font-size: 23px;
}

.datum {
  fill: none;
  stroke: #7b4f59;
}

.plane {
  fill: #7b4f59;
}

.axis {
  fill: #111;
}

.constraint {
  fill: #d0f8c8;
  shape-rendering: auto;
}

.constraint circle,
.constraint circle ~ path {
  stroke: #176c80;
}

.dim-edit {
  position: absolute;
  top: 158px;
  left: 35px;
  padding: 3px;
  border: 1px solid #aaa;
  background: #fff;
}

.dim-edit input {
  display: block;
  width: 101px;
  height: 17px;
  padding: 0;
  border: 0;
  background: #444;
  color: #fff;
}

.view-tools {
  position: absolute;
  top: 7px;
  left: 167px;
  display: flex;
  height: 31px;
  padding: 3px 3px 3px 2px;
  border: 1px solid #a0a0a0;
  background: #f8f8f8;
}

.view-tools button {
  width: 26px;
}

.view-tools .more {
  width: 27px;
}

.view-tools .on {
  width: 24px;
  margin-left: 2px;
}

.more {
  background: linear-gradient(135deg, transparent 50%, #555 50%) right 1px bottom 1px / 4px 4px no-repeat;
}

/* status bar */
.statusbar {
  display: flex;
  align-items: center;
  height: 36px;
  padding: 0 19px 0 6px;
  border-top: 2px solid #969696;
}

.statusbar > button {
  width: 22px;
  height: 22px;
  margin-right: 4px;
}

.message {
  display: flex;
  flex: 1;
  align-items: center;
  gap: 5px;
  align-self: stretch;
  margin: 4px 43px 4px 5px;
  padding-left: 6px;
  border: 1px solid #bbb;
  border-width: 0 1px;
  font-size: 11px;
}

.bullet {
  width: 5px;
  height: 5px;
  border-radius: 50%;
  background: #246b8e;
}

.finder {
  display: flex;
  height: 26px;
  border: 1px solid #bbb;
  background: #fff;
}

.finder button {
  width: 27px;
}

.finder .finder-drop {
  width: 14px;
  background: #ddd;
}

.count {
  width: 99px;
  padding-left: 6px;
}

.filter-select {
  display: flex;
  align-items: center;
  width: 176px;
  height: 24px;
  padding-right: 4px;
  border: 1px solid #aaa;
}

.filter-select select {
  flex: 1;
  height: 22px;
  margin-right: 4px;
  padding: 0 7px;
  border: 0;
  border-right: 1px solid #bbb;
  background: none;
  appearance: none;
}

.watermark {
  position: absolute;
  right: 0;
  bottom: 0;
  display: flex;
  width: 207px;
  height: 62px;
  background: rgba(250, 252, 250, 0.5);
  opacity: 0.8;
  pointer-events: none;
}

.brand {
  display: flex;
  flex-direction: column;
  margin-left: -2px;
  padding-top: 2px;
}

.brand strong {
  padding-left: 8px;
  color: #7fcba2;
  font-size: 29px;
  font-weight: 700;
  line-height: 35px;
}

.brand span {
  color: #b5e1da;
  font-size: 14px;
  line-height: 20px;
}
```
